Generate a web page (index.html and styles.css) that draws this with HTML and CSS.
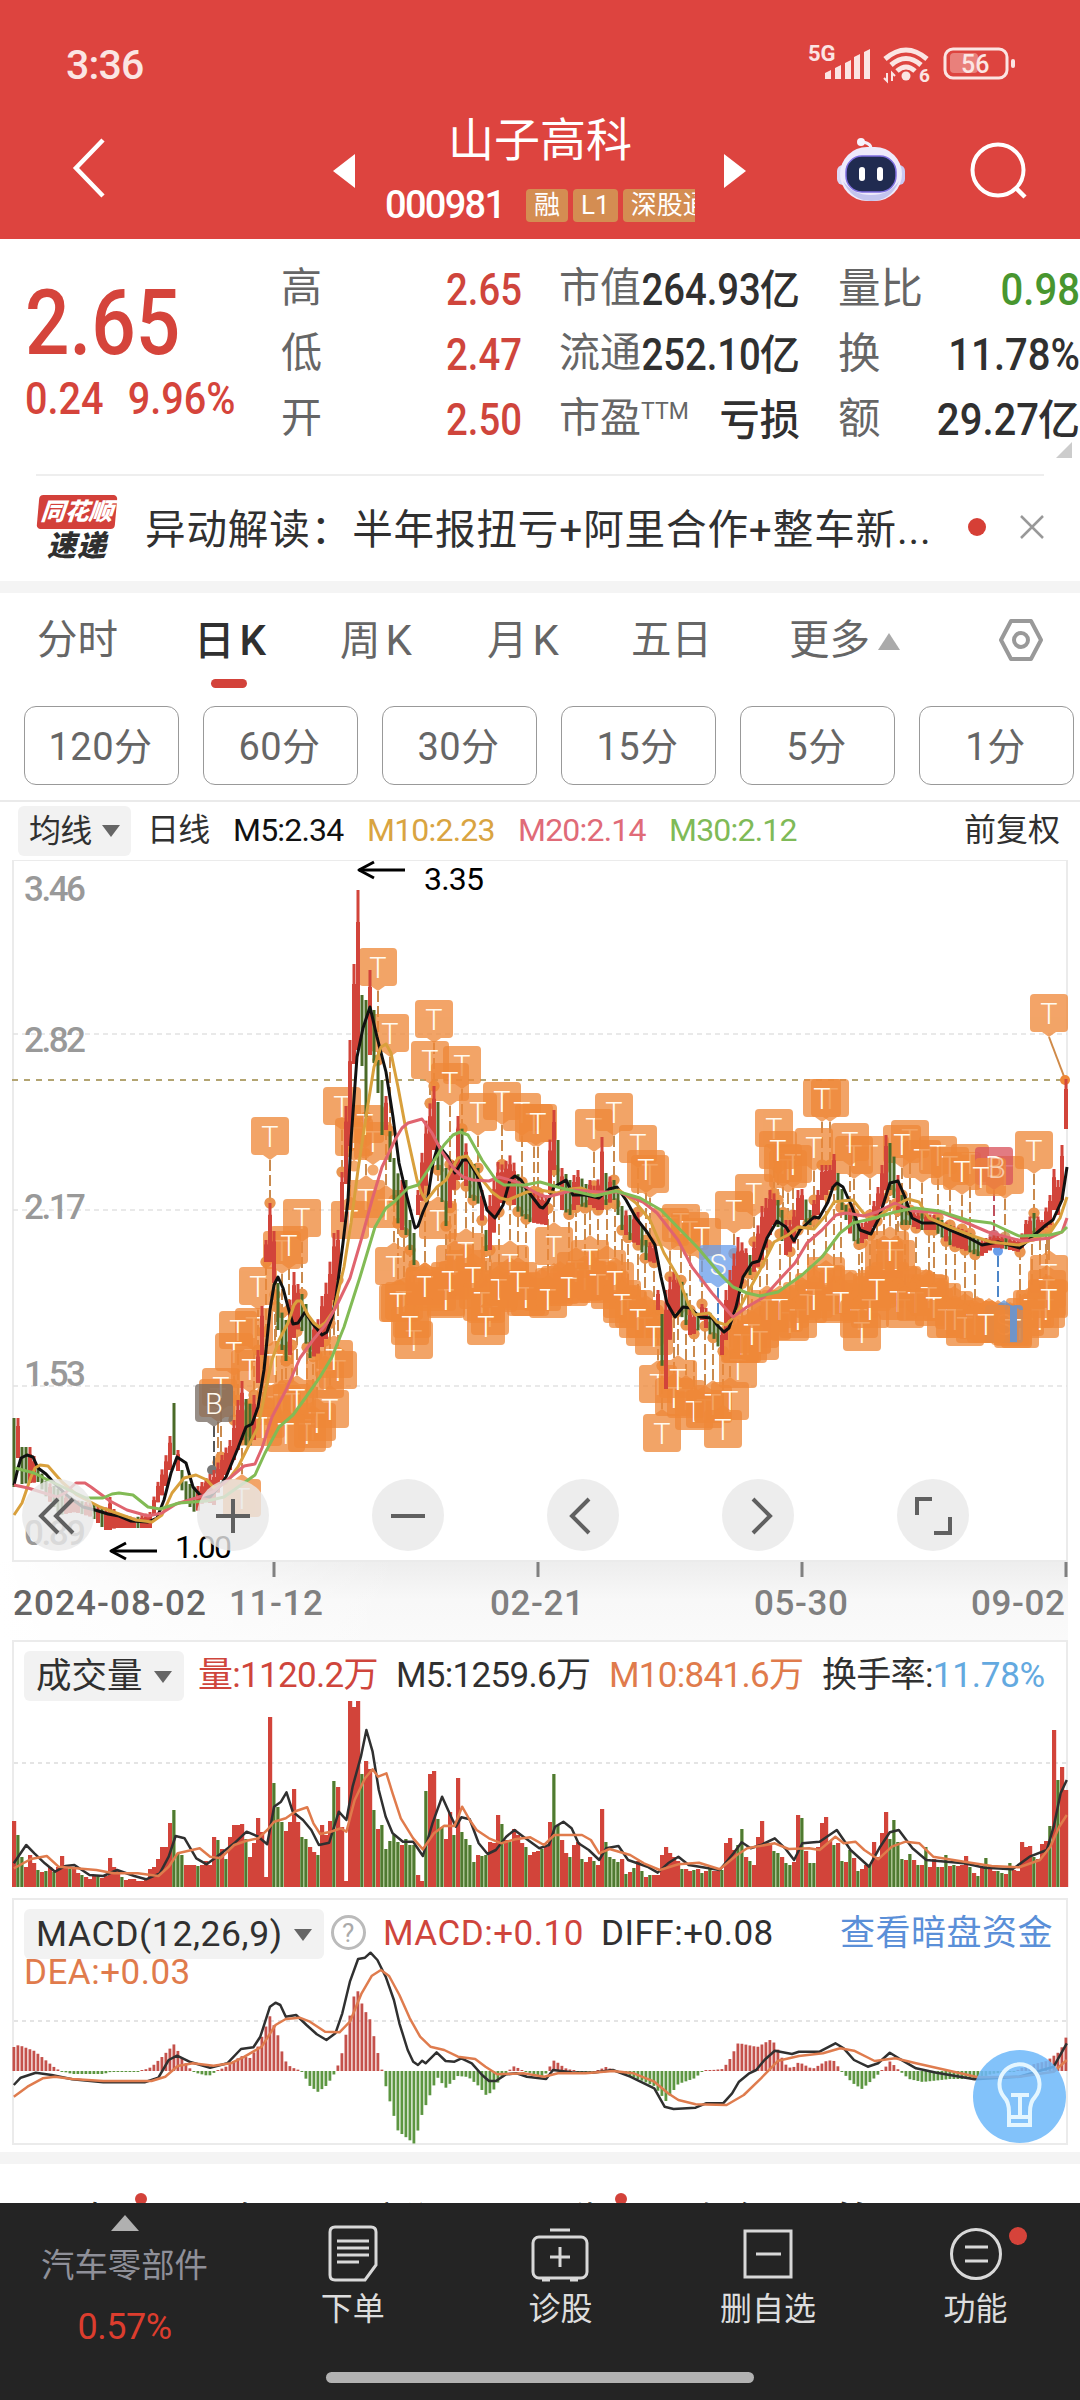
FILE: index.html
```html
<!DOCTYPE html>
<html lang="zh-CN">
<head>
  <meta charset="utf-8">
  <title>山子高科 000981</title>
  <link rel="stylesheet" href="styles.css">
</head>
<body>
  <header>
    <div class="status">
      <span class="clock">3:36</span>
      <svg class="status-icons" width="228" height="44" viewBox="806 42 228 44">
        <g fill="#fbe5e3">
          <text x="808" y="61" class="net">5G</text>
          <path d="M825 73l6-3v9h-6zM835 68l6-3v14h-6zM845 63l6-3v19h-6zM854 57l6-3v25h-6zM864 52l6-3v30h-6z"/>
          <circle cx="906" cy="76" r="4.5"/>
          <text x="919" y="82" class="wifi6">6</text>
          <path d="M887 73v8l-3-3M892 81v-8l3 3" stroke="#fbe5e3" stroke-width="2" fill="none"/>
        </g>
        <g fill="none" stroke="#fbe5e3" stroke-width="5">
          <path d="M885 59q21-18 42 0M891 65q15-13 30 0M897 71q9-8 18 0"/>
        </g>
        <rect x="945" y="49" width="62" height="29" rx="8" fill="none" stroke="#fbe5e3" stroke-width="3"/>
        <rect x="950" y="53" width="28" height="20" rx="4" fill="#e9807b"/>
        <rect x="1011" y="59" width="4" height="9" rx="2" fill="#fbe5e3"/>
        <text x="961" y="73" class="batt" fill="#fbe5e3">56</text>
      </svg>
    </div>
    <div class="titlebar">
      <svg class="back" width="40" height="66" viewBox="0 0 40 66"><path d="M36 4L9 32L36 60" fill="none" stroke="#fff" stroke-width="4.5"/></svg>
      <svg class="prev" width="24" height="36"><path d="M23 1v34L1 18z" fill="#fff"/></svg>
      <div class="stock">
        <div class="stock-name">山子高科</div>
        <div class="stock-code"><span class="code">000981</span><span class="tag">融</span><span class="tag">L1</span><span class="tag cut">深股通</span></div>
      </div>
      <svg class="next" width="24" height="36"><path d="M1 1v34L23 18z" fill="#fff"/></svg>
      <svg class="robot" width="72" height="66" viewBox="0 0 72 66">
        <path d="M36 12q0-7-11-7" fill="none" stroke="#f3eefb" stroke-width="3"/>
        <circle cx="26" cy="5" r="4" fill="#f7f3fd"/>
        <rect x="2" y="28" width="14" height="20" rx="6" fill="#dcd9f6"/>
        <rect x="56" y="28" width="14" height="20" rx="6" fill="#c9c9f3"/>
        <rect x="5" y="10" width="62" height="54" rx="27" fill="#eeeafb"/>
        <path d="M8 44q8 19 28 20q20 0 28-20q-10 14-28 14T8 44" fill="#c3c4ee"/>
        <rect x="11" y="19" width="50" height="36" rx="16" fill="#202b50" stroke="#7f6fe0" stroke-width="1.5"/>
        <rect x="24" y="30" width="6" height="14" rx="3" fill="#fff"/>
        <rect x="42" y="30" width="6" height="14" rx="3" fill="#fff"/>
      </svg>
      <svg class="search" width="60" height="60" viewBox="0 0 60 60"><circle cx="29" cy="28" r="25.5" fill="none" stroke="#fff" stroke-width="4"/><path d="M47 46l9 9" stroke="#fff" stroke-width="4.5"/></svg>
    </div>
  </header>

  <section class="quote">
    <div class="now">
      <div class="price">2.65</div>
      <div class="change"><span>0.24</span><span>9.96%</span></div>
    </div>
    <div class="grid">
      <span class="k">高</span><b class="v red">2.65</b><span class="k">市值</span><b class="v">264.93<i>亿</i></b><span class="k">量比</span><b class="v green">0.98</b>
      <span class="k">低</span><b class="v red">2.47</b><span class="k">流通</span><b class="v">252.10<i>亿</i></b><span class="k">换</span><b class="v">11.78%</b>
      <span class="k">开</span><b class="v red">2.50</b><span class="k">市盈<sup>TTM</sup></span><b class="v"><i>亏损</i></b><span class="k">额</span><b class="v">29.27<i>亿</i></b>
    </div>
    <span class="corner"></span>
  </section>

  <section class="news">
    <div class="logo"><span class="logo-top">同花顺</span><span class="logo-bottom">速递</span></div>
    <div class="news-text">异动解读：半年报扭亏+阿里合作+整车新...</div>
    <span class="dot"></span>
    <svg width="26" height="26" viewBox="0 0 26 26"><path d="M2 2l22 22M24 2L2 24" stroke="#999" stroke-width="2.5"/></svg>
  </section>

  <div class="band"></div>

  <nav class="tabs">
    <span>分时</span><span class="on">日<s>K</s></span><span>周<s>K</s></span><span>月<s>K</s></span><span>五日</span><span>更多<em></em></span>
    <svg width="46" height="46" viewBox="0 0 46 46"><path d="M13 4h20l10 19l-10 19H13L3 23z" fill="none" stroke="#999" stroke-width="4" stroke-linejoin="round"/><circle cx="23" cy="23" r="7" fill="none" stroke="#999" stroke-width="4"/></svg>
  </nav>
  <div class="minutes">
    <button>120分</button><button>60分</button><button>30分</button><button>15分</button><button>5分</button><button>1分</button>
  </div>

  <div class="ma-row">
    <span class="pill">均线<em></em></span><span>日线</span><span class="m5">M5:2.34</span><span class="m10">M10:2.23</span><span class="m20">M20:2.14</span><span class="m30">M30:2.12</span><span class="adj">前复权</span>
  </div>

  <section class="kline">
    <svg id="kline" width="1080" height="780" viewBox="0 860 1080 780"></svg>
    <div class="tools">
      <span><svg width="72" height="72"><path d="M36 20L19 37L36 54M51 20L34 37L51 54"/></svg></span>
      <span><svg width="72" height="72"><path d="M36 20v34M19 37h34"/></svg></span>
      <span><svg width="72" height="72"><path d="M19 37h34"/></svg></span>
      <span><svg width="72" height="72"><path d="M42 20L25 37L42 54"/></svg></span>
      <span><svg width="72" height="72"><path d="M31 20L48 37L31 54"/></svg></span>
      <span><svg width="72" height="72"><path d="M20 36V20h15M53 38v16H37"/></svg></span>
    </div>
  </section>

  <section class="pane volume">
    <div class="legend">
      <span class="pill">成交量<em></em></span><span class="red">量:1120.2万</span><span>M5:1259.6万</span><span class="orange">M10:841.6万</span><span>换手率:<u>11.78%</u></span>
    </div>
    <svg id="volume" width="1056" height="187" viewBox="12 1700 1056 187"></svg>
  </section>

  <section class="pane macd">
    <div class="legend">
      <span class="pill">MACD(12,26,9)<em></em></span><span class="help">?</span><span class="red">MACD:+0.10</span><span>DIFF:+0.08</span><a>查看暗盘资金</a>
    </div>
    <div class="dea orange">DEA:+0.03</div>
    <svg id="macd" width="1056" height="148" viewBox="12 1997 1056 148"></svg>
    <div class="bulb">
      <svg width="92" height="92" viewBox="0 0 92 92" fill="none" stroke="#e4f6ff" stroke-width="4"><path d="M36 62q0-10-5-15a20 20 0 1 1 31 0q-5 5-5 15v13H36zM36 67h21M38 45h18M47 45v21"/></svg>
    </div>
  </section>

  <div class="band low"></div>
  <div class="peek"><span>盘口</span><span>论股</span><span>新闻</span><span>公告</span><span>资金</span><span class="bold">简况</span></div>

  <footer>
    <div class="sector"><em></em><span>汽车零部件</span><b>0.57%</b></div>
    <div class="item"><svg width="60" height="60" viewBox="0 0 60 60"><path d="M12 3h36q5 0 5 5v33L42 56H12q-5 0-5-5V8q0-5 5-5z"/><path d="M14 17h32M14 24h32M14 31h32M14 38h22"/></svg><span>下单</span></div>
    <div class="item"><svg width="60" height="60" viewBox="0 0 60 60"><rect x="3" y="13" width="54" height="41" rx="6"/><path d="M20 6h20M30 23v20M20 33h20M12 56h8M40 56h8"/></svg><span>诊股</span></div>
    <div class="item"><svg width="60" height="60" viewBox="0 0 60 60"><rect x="7" y="7" width="46" height="46"/><path d="M18 30h25"/></svg><span>删自选</span></div>
    <div class="item"><svg width="60" height="60" viewBox="0 0 60 60"><circle cx="30" cy="30" r="24.5"/><path d="M19 23h23M19 37h23"/></svg><span>功能</span><i class="badge"></i></div>
    <div class="home"></div>
  </footer>

  <script src="chart.js"></script>
</body>
</html>
```
FILE: styles.css
```css
* {
  box-sizing: border-box;
}
body {
  margin: 0;
  width: 1080px;
  height: 2400px;
  overflow: hidden;
  background: #fff;
  color: #303030;
  font-family: Roboto, "Noto Sans CJK SC", sans-serif;
}
svg {
  display: block;
}
i, em {
  font-style: normal;
}
.red { color: #cf453c; }
.green { color: #48962f; }
.orange { color: #e07b4c; }

/* header */
header {
  height: 239px;
  background: #dd443f;
  color: #fff;
}
.status {
  height: 100px;
  padding: 42px 46px 0 66px;
  display: flex;
  justify-content: space-between;
}
.clock {
  font-size: 41px;
  line-height: 46px;
  font-weight: 500;
  letter-spacing: -.8px;
  color: #fbe5e3;
}
.net { font-size: 22px; font-weight: 700; }
.wifi6 { font-size: 19px; font-weight: 700; }
.batt { font-size: 25px; font-weight: 500; }
.titlebar {
  display: flex;
  height: 139px;
}
.back { margin: 36px 0 0 67px; }
.prev { margin: 53px 0 0 225px; }
.stock {
  width: 310px;
  margin-left: 29px;
  overflow: hidden;
}
.stock-name {
  text-align: center;
  font-size: 46px;
  line-height: 60px;
  margin-top: 10px;
}
.stock-code {
  display: flex;
  align-items: center;
  white-space: nowrap;
  height: 70px;
}
.code {
  flex: none;
  font-size: 38px;
  width: 141px;
  font-weight: 500;
  letter-spacing: -1.7px;
}
.tag {
  flex: none;
  background: #d48d52;
  border-radius: 4px;
  font-size: 26px;
  line-height: 33px;
  height: 33px;
  padding: 0 8px;
  margin-right: 5px;
}
.cut { margin-right: 0; }
.next { margin: 53px 0 0 28px; }
.robot { margin: 37px 0 0 88px; }
.search { margin: 42px 0 0 62px; }

/* quote */
.quote {
  position: relative;
  display: flex;
  height: 235px;
}
.now {
  width: 281px;
  padding: 36px 0 0 25px;
  color: #d5443b;
}
.price {
  font-size: 90px;
  line-height: 98px;
  font-weight: 500;
  transform: scaleX(.87);
  transform-origin: 0 0;
}
.change {
  display: flex;
  gap: 27px;
  font-size: 44px;
  line-height: 52px;
  font-weight: 500;
  transform: scaleX(.9);
  transform-origin: 0 0;
}
.grid {
  display: grid;
  grid-template-columns: 80px 161px 90px 188px 90px 190px;
  grid-template-rows: 65px 65px 65px;
  padding-top: 17px;
  width: 799px;
}
.k {
  font-size: 41px;
  line-height: 65px;
  color: #666;
  white-space: nowrap;
}
.k:nth-child(6n+3) { margin-left: 37px; }
.k:nth-child(6n+5) { margin-left: 38px; font-size: 42.5px; }
.k sup {
  font-size: 23px;
  line-height: 1px;
  vertical-align: 13px;
}
.v {
  font-size: 44px;
  line-height: 69px;
  font-weight: 500;
  text-align: right;
  white-space: nowrap;
  transform: scaleX(.87);
  transform-origin: 100% 0;
}
.v:nth-child(6n) { transform: scaleX(.91); }
.v i {
  display: inline-block;
  font-size: 42px;
  margin-left: 3px;
  transform: scaleX(1.1);
  transform-origin: 100% 0;
  font-weight: 500;
}
.corner {
  position: absolute;
  right: 8px;
  bottom: 16px;
  border: 8px solid #ccc;
  border-top-color: transparent;
  border-left-color: transparent;
}

/* news */
.news {
  display: flex;
  align-items: center;
  height: 107px;
  margin: 0 36px;
  border-top: 2px solid #eee;
}
.logo {
  width: 82px;
  margin-right: 27px;
  display: flex;
  flex-direction: column;
  align-items: center;
  font-weight: 900;
  font-style: italic;
  line-height: 34px;
}
.logo-top {
  width: 78px;
  font-size: 24px;
  text-align: center;
  color: #fff;
  background: #d3403a;
  border-radius: 4px;
  transform: skewX(-5deg);
}
.logo-bottom {
  font-size: 29px;
  letter-spacing: 1px;
}
.news-text {
  flex: 1;
  font-size: 40.6px;
  letter-spacing: .85px;
  padding-bottom: 5px;
  white-space: nowrap;
}
.dot {
  width: 18px;
  height: 18px;
  margin: -4px 33px 0 0;
  border-radius: 50%;
  background: #d63f36;
}
.news svg { margin-top: -3px; margin-right: -1px; }
.band {
  height: 12px;
  background: #f4f4f4;
}

/* period tabs */
.tabs {
  display: grid;
  grid-template-columns: 157px 146px 147px 144px 158px 207px 50px;
  height: 113px;
  padding-left: 37px;
  font-size: 40.5px;
  line-height: 95px;
  color: #666;
}
.tabs s {
  text-decoration: none;
  font-size: 42px;
  margin-left: 5px;
}
.tabs svg { margin-top: 24px; margin-left: 2px; }
.tabs .on {
  color: #303030;
  font-weight: 500;
  position: relative;
}
.on::after {
  content: "";
  position: absolute;
  left: 17px;
  top: 86px;
  width: 36px;
  height: 9px;
  border-radius: 5px;
  background: #d3423a;
}
.tabs em {
  display: inline-block;
  margin-left: 8px;
  border: 11px solid transparent;
  border-top: 0;
  border-bottom: 17px solid #aaa;
  vertical-align: 4px;
}
.minutes {
  display: flex;
  gap: 24px;
  padding: 0 0 0 24px;
  height: 96px;
  border-bottom: 2px solid #eaeaea;
}
.minutes button {
  flex: none;
  width: 155px;
  height: 79px;
  padding: 0 2px 4px 0;
  border: 1.5px solid #999;
  border-radius: 12px;
  background: #fff;
  color: #666;
  font: 38px Roboto, "Noto Sans CJK SC", sans-serif;
  letter-spacing: .5px;
}

/* average line row */
.ma-row {
  display: grid;
  grid-template-columns: 129px 86px 134px 151px 151px 293px 98px;
  padding-left: 18px;
  height: 58px;
  font-size: 32px;
  line-height: 57px;
  white-space: nowrap;
  letter-spacing: -.8px;
}
.pill {
  justify-self: start;
  align-self: center;
  background: #f2f2f2;
  border-radius: 6px;
  height: 50px;
  line-height: 50px;
  padding: 0 11px;
}
.pill em {
  display: inline-block;
  margin-left: 11px;
  border: 9px solid transparent;
  border-bottom: 0;
  border-top: 12px solid #666;
  vertical-align: 5px;
}
.m5 { color: #111; }
.m10 { color: #d9a441; }
.m20 { color: #e06b78; }
.m30 { color: #7fba58; }
.adj { text-align: right; letter-spacing: 0; }

/* k line */
.kline {
  position: relative;
  height: 780px;
}
.tools {
  position: absolute;
  left: 22px;
  top: 619px;
  display: flex;
  gap: 103px;
}
.tools span {
  width: 72px;
  height: 72px;
  border-radius: 50%;
  background: rgba(232, 232, 232, .8);
}
.tools path {
  fill: none;
  stroke: #606060;
  stroke-width: 4;
}
.axis { font-size: 35px; fill: #999; font-weight: 500; }
.date { font-size: 35px; fill: #808080; font-weight: 500; }
.first { fill: #666; }
.mark { font-size: 32px; fill: #000; }
.flag { font-size: 29px; font-weight: 300; fill: #fffaf0; text-anchor: middle; }

/* sub charts */
.pane {
  position: relative;
  margin: 0 12px;
  box-shadow: inset 0 0 0 2px #ebebeb;
}
.pane svg { overflow: visible; }
.legend {
  display: grid;
  font-size: 35px;
  line-height: 51px;
  white-space: nowrap;
  padding-top: 10px;
}
.volume {
  height: 247px;
  margin-bottom: 11px;
  box-shadow: inset 2px 2px #ebebeb, inset -2px 0 #ebebeb;
}
.volume .legend {
  height: 60px;
  padding-left: 12px;
  grid-template-columns: 174px 198px 213px 213px 240px;
  letter-spacing: -.7px;
}
.volume .pill, .macd .pill { font-size: 35.5px; letter-spacing: 0; padding: 0 12px; }
.legend u { color: #63a9e0; text-decoration: none; letter-spacing: -.2px; }
.macd { height: 247px; }
.macd .legend {
  height: 60px;
  padding-left: 12px;
  grid-template-columns: 307px 52px 218px 239px 214px;
  letter-spacing: .5px;
}
.macd .legend .pill { letter-spacing: .6px; }
.macd .legend a { color: #5a8fd8; }
.help {
  width: 35px;
  height: 35px;
  margin-top: 7px;
  border: 3px solid #bbb;
  border-radius: 50%;
  color: #aaa;
  font-size: 26px;
  line-height: 30px;
  text-align: center;
}
.dea {
  height: 39px;
  padding-left: 12px;
  font-size: 35px;
  line-height: 30px;
  letter-spacing: .5px;
}
.bulb {
  position: absolute;
  right: 2px;
  top: 152px;
  width: 93px;
  height: 93px;
  border-radius: 50%;
  background: rgba(110, 184, 249, .86);
}
.low { margin-top: 7px; }
.peek {
  height: 39px;
  padding: 32px 0 0 76px;
  overflow: hidden;
  display: grid;
  grid-template-columns: 144px 157px 155px 155px 148px 200px;
  font-size: 38px;
  line-height: 50px;
}
.bold { font-weight: 700; }
.peek span { position: relative; }
.peek span:nth-child(3n+1)::before {
  content: "";
  position: absolute;
  left: 59px;
  top: -3px;
  width: 12px;
  height: 12px;
  border-radius: 50%;
  background: #d3423a;
}
.peek span:nth-child(4)::before { left: 83px; }

/* bottom bar */
footer {
  position: relative;
  height: 197px;
  display: flex;
  background: #242424;
  color: #ddd;
  font-size: 32px;
}
.sector {
  width: 249px;
  display: flex;
  flex-direction: column;
  align-items: center;
  color: #8f9099;
  padding-top: 12px;
}
.sector em {
  border: 14px solid transparent;
  border-top: 0;
  border-bottom: 16px solid #b0b0b0;
}
.sector span {
  font-size: 33.4px;
  line-height: 70px;
}
.sector b {
  font-weight: 400;
  font-size: 36px;
  line-height: 53px;
  letter-spacing: -.5px;
  color: #dc3d2e;
}
.item {
  position: relative;
  width: 207.6px;
  padding-top: 21px;
  display: flex;
  flex-direction: column;
  align-items: center;
}
.item svg {
  fill: none;
  stroke: #d8d8d8;
  stroke-width: 3;
}
.item span { line-height: 51px; }
.badge {
  position: absolute;
  left: 137px;
  top: 24px;
  width: 18px;
  height: 18px;
  border-radius: 50%;
  background: #d6433a;
}
.home {
  position: absolute;
  left: 326px;
  top: 169px;
  width: 428px;
  height: 11px;
  border-radius: 6px;
  background: #b2b2b2;
}
```
FILE: chart.js
```js
// x, high, low of the daily bars; the days between are interpolated
const days = [
  [14,1418,1487],[18,1418,1458],[22,1447,1484],[30,1447,1483],[38,1465,1482],[45,1480,1495],[60,1490,1515],[75,1500,1512],[92,1503,1517],[105,1510,1530],[110,1497,1530],[115,1512,1528],[135,1518,1528],[150,1512,1528],[157,1485,1504],[165,1460,1490],[170,1436,1470],[174,1403,1455],[178,1450,1471],[184,1480,1500],[196,1488,1514],[204,1480,1500],[214,1470,1505],[222,1455,1480],[230,1440,1470],[238,1400,1450],[242,1381,1440],[248,1408,1448],[254,1395,1440],[258,1350,1383],[262,1306,1355],[266,1240,1262],[270,1203,1262],[274,1231,1283],[278,1283,1330],[283,1320,1355],[288,1320,1365],[293,1269,1340],[300,1290,1325],[305,1300,1340],[310,1320,1358],[317,1325,1355],[322,1296,1347],[328,1276,1335],[334,1233,1300],[338,1230,1280],[342,1172,1222],[350,1040,1146],[354,964,1064],[358,890,1050],[362,995,1066],[366,1000,1117],[370,970,1055],[374,1010,1063],[378,1060,1093],[382,1080,1135],[386,1096,1130],[391,1140,1170],[396,1170,1220],[402,1180,1230],[406,1180,1235],[410,1220,1250],[414,1233,1265],[418,1190,1215],[425,1125,1190],[434,1086,1150],[438,1102,1170],[442,1150,1202],[446,1168,1226],[455,1160,1185],[458,1116,1180],[464,1135,1180],[470,1160,1198],[480,1170,1205],[486,1230,1251],[490,1195,1250],[498,1162,1215],[503,1165,1200],[511,1154,1200],[520,1180,1215],[530,1190,1222],[546,1195,1225],[549,1147,1200],[554,1110,1170],[558,1140,1185],[562,1168,1210],[570,1180,1215],[578,1170,1205],[585,1185,1208],[590,1180,1205],[597,1190,1210],[602,1137,1210],[606,1173,1205],[614,1180,1200],[622,1206,1230],[630,1215,1240],[638,1212,1245],[646,1240,1260],[655,1245,1263],[658,1290,1310],[661,1320,1360],[666,1290,1389],[672,1270,1315],[677,1274,1310],[684,1285,1320],[690,1310,1335],[697,1315,1333],[702,1304,1320],[708,1310,1332],[715,1320,1340],[722,1330,1355],[726,1290,1340],[730,1270,1320],[738,1237,1310],[744,1245,1270],[750,1255,1275],[756,1235,1270],[762,1206,1260],[770,1190,1235],[776,1195,1220],[786,1220,1255],[792,1220,1250],[798,1190,1230],[802,1189,1220],[810,1210,1225],[818,1190,1215],[822,1165,1200],[830,1165,1190],[834,1154,1185],[838,1173,1200],[846,1205,1220],[852,1210,1240],[860,1225,1245],[870,1215,1235],[880,1180,1215],[886,1135,1190],[890,1143,1190],[895,1160,1200],[902,1195,1225],[910,1210,1225],[920,1213,1230],[934,1215,1230],[950,1225,1245],[965,1230,1250],[980,1240,1257],[995,1235,1247],[1020,1240,1252],[1026,1220,1240],[1034,1213,1235],[1042,1220,1230],[1050,1195,1225],[1054,1169,1210],[1058,1180,1215],[1062,1145,1200],[1066,1079,1129]
];

const ma5 = "14,1485 18,1468 21,1458 27,1455 33,1457 38,1468 46,1474 57,1486 69,1497 83,1507 95,1510 108,1514 119,1516 131,1521 148,1522 157,1518 164,1500 171,1473 177,1457 186,1463 193,1487 200,1495 210,1497 219,1487 226,1477 238,1448 246,1427 252,1424 258,1407 264,1370 270,1310 274,1285 278,1277 283,1288 288,1307 293,1324 298,1323 305,1312 312,1323 322,1335 327,1332 332,1318 336,1297 343,1243 348,1200 351,1140 357,1057 363,1028 370,1007 377,1037 386,1072 393,1117 399,1163 406,1193 415,1228 418,1226 423,1212 427,1203 433,1163 438,1145 448,1157 455,1173 463,1160 468,1160 477,1175 487,1210 495,1218 503,1205 510,1180 515,1176 521,1180 527,1190 540,1207 543,1208 548,1202 554,1187 566,1180 573,1195 585,1195 599,1198 609,1189 617,1187 626,1200 636,1218 647,1232 655,1245 661,1277 667,1303 675,1317 683,1307 690,1308 700,1317 712,1318 717,1325 724,1332 729,1328 736,1307 743,1277 752,1263 759,1261 767,1238 777,1221 786,1227 794,1241 800,1230 814,1217 819,1218 828,1202 833,1187 837,1183 843,1187 852,1207 860,1230 871,1234 879,1218 890,1183 898,1181 905,1197 912,1218 922,1223 936,1223 950,1230 967,1237 982,1245 998,1242 1020,1248 1032,1237 1046,1225 1053,1220 1062,1200 1067,1167";
const ma10 = "14,1515 22,1503 31,1477 35,1468 40,1465 48,1466 62,1482 77,1495 100,1507 119,1514 136,1520 152,1522 162,1515 172,1493 184,1478 196,1475 207,1480 214,1488 226,1483 238,1467 250,1443 258,1427 265,1393 272,1360 279,1340 288,1323 294,1305 297,1301 301,1301 308,1315 314,1323 319,1327 325,1323 334,1310 344,1267 351,1223 358,1170 365,1123 374,1067 381,1047 386,1044 391,1053 398,1087 406,1130 417,1180 421,1192 426,1201 437,1187 446,1180 458,1158 467,1156 480,1177 492,1192 500,1198 508,1200 527,1192 540,1190 557,1193 570,1189 581,1188 599,1195 619,1190 636,1203 650,1220 664,1253 678,1277 688,1303 695,1315 709,1313 717,1322 726,1325 736,1315 748,1292 760,1270 774,1242 788,1235 798,1227 814,1229 826,1215 834,1202 841,1201 853,1200 865,1215 877,1218 890,1208 908,1199 919,1202 929,1218 950,1227 970,1235 991,1242 1019,1245 1036,1238 1050,1233 1060,1218 1067,1197";
const ma20 = "14,1485 28,1488 57,1497 65,1493 76,1483 85,1483 91,1487 110,1501 127,1510 148,1516 162,1513 176,1504 196,1498 213,1492 231,1477 244,1466 255,1464 262,1448 272,1417 286,1390 300,1358 313,1340 327,1323 337,1305 350,1278 362,1237 372,1200 382,1167 396,1138 402,1128 408,1123 422,1119 432,1133 442,1152 455,1170 463,1177 473,1180 489,1181 499,1177 517,1182 540,1195 547,1197 574,1190 599,1192 619,1192 643,1202 657,1213 678,1240 692,1267 712,1293 733,1317 747,1307 764,1297 781,1278 795,1263 807,1243 822,1230 836,1215 846,1213 864,1216 877,1212 895,1203 912,1211 943,1213 967,1223 988,1232 1022,1241 1050,1238 1062,1232 1067,1218";
const ma30 = "15,1468 34,1473 52,1482 69,1490 86,1498 103,1498 112,1494 119,1493 133,1495 148,1507 160,1509 179,1503 207,1501 224,1497 241,1485 255,1475 265,1453 279,1427 293,1415 306,1397 320,1377 332,1357 344,1327 360,1277 375,1227 386,1208 394,1202 408,1188 418,1185 430,1167 444,1145 453,1135 460,1132 468,1135 482,1160 496,1180 504,1185 525,1185 540,1182 561,1188 595,1196 616,1191 640,1198 661,1210 698,1248 719,1273 733,1287 747,1293 760,1296 778,1292 802,1275 822,1257 840,1233 853,1223 871,1219 895,1212 915,1208 939,1211 967,1220 991,1223 1019,1236 1050,1235 1062,1232 1067,1227";

// trade flags: x, top of the box
const above = [[270,1117],[302,1199],[378,948],[390,1014],[434,1000],[430,1041],[462,1046],[450,1063],[502,1082],[478,1093],[522,1093],[534,1104],[354,1118],[342,1087],[373,1122],[365,1105],[282,1231],[289,1226],[258,1267],[254,1308],[238,1311],[234,1333],[250,1350],[218,1379],[221,1368],
  [538,1104],[594,1109],[614,1093],[638,1125],[650,1155],[646,1150],[670,1208],[681,1204],[690,1212],[702,1218],[754,1174],[734,1191],[774,1109],[783,1144],[788,1150],[793,1145],[778,1131],[814,1128],[830,1079],[822,1079],[870,1136],[854,1136],[850,1123],[910,1120],[902,1125],[922,1140],[938,1136],[970,1144],[950,1147],[962,1152],[1034,1131]];
const below = [[242,1479],[266,1400],[276,1387],[282,1385],[292,1384],[313,1410],[307,1414],[317,1403],[297,1380],[330,1390],[263,1408],[286,1414],[275,1345],[325,1360],[338,1351],[334,1340],[386,1190],[366,1180],[350,1201],[394,1247],[404,1282],[398,1284],[414,1321],[410,1307],[438,1201],[446,1280],[425,1267],[455,1245],[450,1262],[466,1233],[473,1258],[490,1297],[482,1283],[486,1307],[510,1245],[499,1270],[526,1278],[518,1262],
  [548,1280],[554,1227],[576,1252],[585,1260],[569,1268],[607,1250],[590,1240],[598,1265],[615,1262],[628,1290],[622,1285],[645,1308],[638,1300],[654,1317],[658,1365],[662,1414],[686,1380],[674,1378],[678,1360],[705,1390],[694,1392],[713,1385],[730,1382],[723,1410],[738,1350],[748,1325],[742,1325],[760,1322],[752,1315],[767,1290],[790,1303],[780,1290],[798,1300],[808,1285],[814,1280],[826,1257],[834,1285],[841,1283],[859,1300],[862,1313],[870,1290],[877,1270],[884,1240],[896,1240],[890,1231],[905,1290],[898,1282],[916,1283],[929,1278],[934,1288],[946,1300],[955,1300],[965,1308],[975,1305],[1020,1310],[1032,1290],[1040,1300],[1046,1290],[1049,1255],[1047,1270],[1049,1280]];
// bottom rows packed so close that only the last flag stays readable
const packed = [[400,1284],[412,1300],[425,1267],[446,1278],[466,1250],[486,1285],[510,1262],[530,1278],[560,1266],[598,1262],[622,1280],[650,1303],[740,1325],[760,1310],[790,1290],[826,1265],[860,1280],[890,1262],[930,1275],[965,1298],[998,1305],[1013,1308],[1035,1290],[1049,1277]];

// volume bar heights, one per day
const vol = [66,52,30,20,32,24,17,15,16,20,15,20,31,22,18,20,14,12,10,8,12,12,9,11,29,20,17,10,7,8,8,6,6,8,18,20,28,40,40,64,77,33,32,22,22,22,21,22,26,22,50,47,38,28,50,62,62,63,48,30,44,69,55,10,170,104,80,65,56,65,98,65,50,48,40,35,32,62,52,66,106,100,60,6,186,180,186,113,126,118,77,58,62,38,46,52,45,42,48,42,42,12,6,96,113,116,68,60,48,75,52,109,55,48,42,25,32,31,32,45,44,72,63,47,45,58,52,44,40,32,35,36,38,40,65,113,62,47,34,30,42,45,28,25,30,26,22,78,45,30,28,25,28,13,15,19,26,16,10,12,12,12,32,40,34,30,26,18,18,16,17,18,14,16,18,16,16,17,44,49,37,42,58,30,26,22,50,66,44,44,36,34,30,24,22,25,72,69,36,24,24,40,64,70,46,42,44,26,25,37,29,16,18,22,22,45,30,54,75,48,67,45,28,27,33,27,22,22,40,20,28,20,20,32,21,22,21,22,31,20,14,11,20,29,22,16,16,14,13,24,17,16,45,40,41,30,28,43,46,61,157,107,120,97];
const volGreen = [1,2,6,8,10,14,17,21,27,40,41,42,46,51,53,58,65,66,67,72,73,76,80,87,90,92,93,94,95,96,98,99,100,103,106,107,110,112,113,114,115,117,118,122,124,128,132,135,136,139,142,145,148,149,150,151,153,155,157,159,167,170,172,174,177,181,182,184,190,191,193,194,197,199,200,205,207,209,211,214,219,220,221,222,224,226,228,231,233,235,239,241,243,246,247,249,255,259,261];

const vm5 = "20,700 38,645 50,670 65,700 80,725 95,708 108,705 130,735 150,738 170,720 195,738 212,748 232,730 245,680 255,618 268,625 285,685 300,703 315,680 340,640 358,605 375,620 388,643 398,530 408,515 416,487 425,545 440,570 452,600 463,645 478,638 492,545 503,570 512,470 524,380 532,300 541,365 550,480 560,560 570,610 585,635 600,635 614,678 628,580 642,500 655,560 662,590 670,562 682,568 695,640 708,672 720,660 735,620 747,600 760,620 783,655 797,645 806,590 818,575 830,595 840,640 855,660 870,690 880,655 898,648 912,690 940,710 955,728 970,700 985,680 1000,705 1045,720 1065,670 1077,637 1090,655 1105,645 1125,625 1140,655 1153,690 1165,640 1190,635 1215,600 1235,660 1262,710 1278,650 1292,607 1305,600 1325,655 1345,690 1400,700 1430,713 1470,718 1495,680 1520,660 1530,590 1540,490 1549,450";
const vm10 = "20,715 45,687 68,678 85,710 110,715 140,720 165,730 200,730 230,738 245,710 258,670 290,655 305,680 320,685 340,645 358,632 375,625 388,600 398,575 415,565 430,543 446,532 455,580 465,612 480,605 495,595 503,605 515,510 530,445 541,418 549,440 561,430 570,490 582,565 600,625 614,658 630,610 645,587 660,588 671,530 682,570 692,600 710,625 728,640 748,628 770,622 790,645 805,615 845,615 858,630 870,670 885,657 915,675 935,700 958,720 985,703 1015,698 1045,718 1070,675 1085,655 1125,640 1145,657 1175,655 1190,660 1213,620 1225,640 1242,635 1255,660 1275,688 1295,650 1315,635 1335,640 1355,680 1400,695 1440,708 1480,712 1510,690 1525,650 1538,590 1549,555";
const diff = "20,585 30,563 52,548 75,555 105,568 150,577 210,577 230,563 245,510 257,497 275,515 305,533 330,520 350,477 368,472 378,440 392,350 400,338 407,345 415,380 430,375 445,405 460,433 474,450 487,430 497,370 508,275 520,207 530,203 538,188 548,210 560,260 572,330 580,400 592,480 600,515 607,525 613,512 618,520 634,487 647,513 660,515 670,505 685,520 700,555 710,573 720,573 735,553 750,550 765,560 793,567 803,540 830,547 860,548 890,540 915,560 950,595 965,650 978,657 1010,653 1025,640 1050,640 1063,610 1073,575 1088,550 1098,540 1110,510 1125,482 1150,492 1160,485 1190,485 1213,460 1225,475 1240,510 1260,530 1275,520 1292,488 1305,505 1330,535 1360,548 1415,568 1480,560 1530,530 1549,460";
const dea = "20,620 40,590 62,565 80,560 105,567 150,573 220,573 240,560 258,528 280,520 310,527 335,520 355,500 380,470 400,405 415,387 435,383 450,395 472,425 493,427 508,395 525,310 540,257 553,240 565,258 580,315 595,385 610,440 625,470 645,480 665,500 690,507 705,530 722,553 760,550 790,560 810,550 850,550 890,543 920,550 950,575 970,610 985,630 1010,643 1055,645 1080,615 1105,565 1130,512 1160,498 1195,490 1220,475 1240,482 1270,513 1300,505 1330,520 1380,543 1420,562 1480,560 1530,545 1549,510";
const hist = [[20,24],[27,26],[50,20],[80,3],[88,0],[105,-3],[150,-3],[160,-1],[205,0],[220,4],[235,14],[253,27],[262,15],[275,3],[285,-2],[303,-5],[315,0],[330,5],[350,15],[363,13],[375,25],[392,55],[403,37],[412,12],[422,4],[438,0],[450,-15],[462,-21],[475,-14],[488,0],[497,19],[507,52],[514,75],[520,80],[527,64],[537,52],[548,20],[555,0],[562,-20],[578,-60],[602,-73],[612,-45],[625,-23],[635,-6],[647,-17],[665,-5],[680,-6],[695,-15],[707,-25],[718,-18],[725,-9],[738,0],[747,5],[760,0],[790,-6],[797,3],[805,11],[820,3],[850,-3],[865,0],[880,4],[895,0],[930,-9],[950,-15],[967,-30],[985,-13],[1010,-7],[1020,0],[1050,2],[1060,12],[1072,28],[1100,24],[1118,31],[1125,28],[1140,7],[1150,2],[1160,9],[1180,2],[1200,10],[1210,11],[1222,0],[1238,-12],[1252,-18],[1270,-7],[1285,3],[1293,10],[1302,3],[1320,-8],[1340,-11],[1380,-8],[1418,-8],[1440,-3],[1475,0],[1490,5],[1520,10],[1540,20],[1549,35]];

const RED = "#d2443a", GREEN = "#4a6a28";

// value of column c at x, linear between the two neighbours
function at(list, x, c) {
  if (x <= list[0][0]) return list[0][c];
  for (let i = 1; i < list.length; i++) {
    if (x <= list[i][0]) {
      const a = list[i - 1], b = list[i];
      return a[c] + (b[c] - a[c]) * (x - a[0]) / (b[0] - a[0]);
    }
  }
  return list[list.length - 1][c];
}

function rect(x, y, w, h, fill, extra = "") {
  return `<rect x="${x}" y="${y}" width="${w}" height="${h}" fill="${fill}" ${extra}/>`;
}
function poly(points, color, width = 3) {
  return `<polyline points="${points}" fill="none" stroke="${color}" stroke-width="${width}" stroke-linejoin="round"/>`;
}
function dashed(x1, y1, x2, y2, color, dash, width = 2) {
  return `<line x1="${x1}" y1="${y1}" x2="${x2}" y2="${y2}" stroke="${color}" stroke-width="${width}" stroke-dasharray="${dash}"/>`;
}

function stem(x, y, up, color) {
  const end = up ? at(days, x, 1) : at(days, x, 2);
  const start = up ? y + 43 : y - 5;
  if (up ? end < start : end > start) return "";
  return dashed(x, start, x, end, color, "11 4") +
    `<circle cx="${x}" cy="${end}" r="5.5" fill="${color}" opacity=".8"/>`;
}
function flag(x, y, up, letter = "T", color = "#ef8838") {
  const tip = up ? `M${x - 7} ${y + 38}h14l-7 5z` : `M${x - 7} ${y}h14l-7 -5z`;
  const label = letter ? `<text class="flag" x="${x}" y="${y + 30}">${letter}</text>` : "";
  return `<g fill="${color}" opacity=".76">${rect(x - 19, y, 38, 38, color, 'rx="4"')}<path d="${tip}"/></g>` + label;
}

function drawKline() {
  let s = `<defs><linearGradient id="strip" x2="0" y2="1"><stop offset="0" stop-color="#ededed"/><stop offset=".5" stop-color="#f8f8f8"/><stop offset="1" stop-color="#fafafa"/></linearGradient>
    <linearGradient id="fade"><stop offset="0" stop-color="#fff"/><stop offset="1" stop-color="#fff" stop-opacity="0"/></linearGradient></defs>`;
  s += rect(0, 1561, 1080, 79, "url(#strip)") + rect(0, 1561, 400, 79, "url(#fade)") + rect(1068, 1561, 12, 79, "#fff");
  s += `<rect x="13" y="860" width="1054" height="701" fill="none" stroke="#ebebeb" stroke-width="2"/>`;
  [1034, 1210, 1386].forEach(y => s += dashed(13, y, 1067, y, "#e2e2e2", "5 4", 1.5));
  s += dashed(12, 1080, 1067, 1080, "#b3a471", "6 6");
  [["3.46", 901], ["2.82", 1052], ["2.17", 1219], ["1.53", 1386], ["0.89", 1545]].forEach(([t, y]) =>
    s += `<text class="axis" x="24" y="${y}" textLength="62">${t}</text>`);

  above.forEach(([x, y]) => s += stem(x, y, true, "#c98a4e"));
  below.forEach(([x, y]) => s += stem(x, y, false, "#c98a4e"));
  s += stem(994, 1147, true, "#c0505c") + stem(1005, 1156, true, "#c98a4e");
  above.forEach(([x, y]) => s += `<circle cx="${x}" cy="${Math.max(y + 48, at(days, x, 1))}" r="5.5" fill="#f09449" opacity=".8"/>`);
  below.forEach(([x, y]) => s += `<circle cx="${x}" cy="${Math.min(y - 10, at(days, x, 2))}" r="5.5" fill="#f09449" opacity=".8"/>`);

  [...packed.keys()].slice(0, -1).forEach(i => {
    const [a, b] = [packed[i], packed[i + 1]];
    if (b[0] - a[0] > 60) return;
    for (let x = a[0]; x < b[0]; x += 12) s += flag(x, Math.round(at(packed, x, 1)), false, "");
  });
  above.forEach(([x, y]) => s += flag(x, y, true));
  s += flag(718, 1245, true, "S", "#6a9eea") + dashed(718, 1288, 718, 1330, "#4d86c8", "11 4");
  s += flag(1005, 1156, true) + flag(994, 1147, true, "B", "#d9535c");
  s += `<g opacity=".75">${rect(975, 1158, 31, 38, "#ef8838", 'rx="4"')}</g><text class="flag" x="981" y="1188">T</text><text class="flag" x="997" y="1178" opacity=".6">B</text>`;
  below.forEach(([x, y]) => s += flag(x, y, false));
  s += flag(1004, 1305, false, "S", "#5e93d8") + flag(1013, 1310, false) + flag(992, 1305, false, "") + flag(986, 1305, false);
  s += `<circle cx="998" cy="1251" r="5" fill="#6a9eea"/>` + dashed(998, 1256, 998, 1300, "#4d86c8", "11 4");
  s += rect(1010, 1306, 7, 36, "#6f94c8");
  s += dashed(214, 1426, 214, 1468, "#555", "11 4") + `<circle cx="212" cy="1470" r="5" fill="#777"/>` + flag(214, 1384, true, "B", "#776b62");
  s += `<path d="M1049 1037L1065 1079" stroke="#d08a48" stroke-width="2"/>` + flag(1049, 994, true) + `<circle cx="1065" cy="1080" r="5" fill="#ef8838"/>`;

  let prev = 1450;
  for (let i = 0; i < 264; i++) {
    const x = 14 + i * 4;
    const hi = at(days, x, 1), lo = at(days, x, 2), mid = (hi + lo) / 2;
    const green = (mid > prev + 2 && i % 4 !== 1) || i % 7 === 3 && mid > prev - 4 || i === 40;
    const body = (lo - hi) * .2;
    s += rect(x - 1.5, hi, 3, lo - hi, green ? GREEN : RED);
    if (!green) s += rect(x - 2, hi + body, 4, lo - hi - body, RED);
    prev = mid;
  }
  s += poly(ma5, "#111") + poly(ma10, "#d9a03c") + poly(ma20, "#e0646f") + poly(ma30, "#82bb55");

  s += poly("374,862 359,870 374,878", "#000") + poly("359,870 405,870", "#000");
  s += `<text class="mark" x="424" y="890" textLength="60">3.35</text>`;
  s += poly("126,1543 111,1551 126,1559", "#000") + poly("111,1551 157,1551", "#000");
  s += `<text class="mark" x="175" y="1558" textLength="57">1.00</text>`;
  [274, 538, 802, 1066].forEach(x => s += rect(x - 1.5, 1562, 3, 15, "#808080"));
  [["11-12", 229], ["02-21", 490], ["05-30", 754], ["09-02", 971]].forEach(([t, x]) =>
    s += `<text class="date" x="${x}" y="1615" textLength="94">${t}</text>`);
  s += `<text class="date first" x="13" y="1615" textLength="193">2024-08-02</text>`;
  document.getElementById("kline").innerHTML = s;
}

// the sub charts are sampled on a 1568 wide grid
function scale(points, top) {
  return points.split(" ").map(p => {
    const [x, y] = p.split(",");
    return (x / 1.452).toFixed(1) + "," + (top + y / 3).toFixed(1);
  }).join(" ");
}

function drawVolume() {
  let s = dashed(14, 1763, 1066, 1763, "#e4e4e4", "4 4");
  vol.forEach((h, i) => {
    const x = 12 + i * 4;
    if (volGreen.includes(i)) s += rect(x, 1887 - h, 4, h, "#a9c190") + rect(x + .5, 1887 - h, 2.5, h, "#4f7a31");
    else s += rect(x, 1887 - h, 4.2, h, RED);
  });
  s += poly(scale(vm5, 1630), "#303030", 2.5) + poly(scale(vm10, 1630), "#e07b4c", 2.5);
  document.getElementById("volume").innerHTML = s;
}

function drawMacd() {
  let s = dashed(14, 2021, 1066, 2021, "#e4e4e4", "4 4");
  for (let i = 0; i < 264; i++) {
    const v = at(hist, 20 + i * 5.81, 1);
    const h = Math.max(Math.abs(v), 1);
    s += rect(12.5 + i * 4, v > 0 ? 2071 - h : 2071, 2.8, h, v > 0 ? "#c4514b" : "#5c9641");
  }
  s += poly(scale(diff, 1890), "#303030", 2.5) + poly(scale(dea, 1890), "#df7c4e", 2.5);
  document.getElementById("macd").innerHTML = s;
}

drawKline();
drawVolume();
drawMacd();
```
